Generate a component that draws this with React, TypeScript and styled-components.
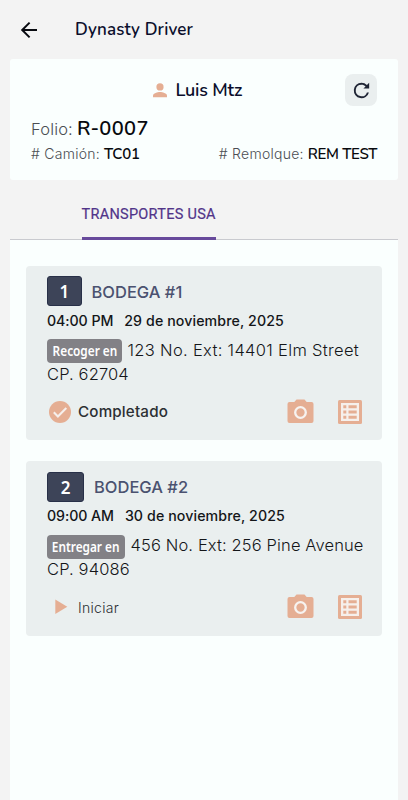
import React from "react";
import styled, { createGlobalStyle } from "styled-components";

const Global = createGlobalStyle`
  * { box-sizing: border-box; }
  body { margin: 0; background: #f3f3f3; font-family: Inter, "Noto Sans", sans-serif; color: #141619; }
  button { border: 0; padding: 0; background: none; font: inherit; color: inherit; }
  svg { display: block; flex: none; }
`;

const Screen = styled.div`
  height: 800px;
  display: flex;
  flex-direction: column;
  overflow: hidden;
`;
const TopBar = styled.header`
  height: 59px;
  flex: none;
  display: flex;
  align-items: center;
  padding: 1px 0 0 17px;
  gap: 34px;
`;
const Title = styled.h1<{ $spacing: number; $size: number }>`
  margin: 0;
  font: 600 ${(p) => p.$size}px/24px "Nunito", "Lato", sans-serif;
  letter-spacing: ${(p) => p.$spacing}px;
  color: #0b0e2c;
  white-space: nowrap;
`;
const Summary = styled.section`
  height: 121px;
  flex: none;
  margin: 0 10px;
  padding: 15px 21px 0;
  border-radius: 3px;
  background: #fafffe;
`;
const DriverRow = styled.div`
  display: grid;
  grid-template-columns: 122px 1fr 32px;
  align-items: center;
  height: 32px;
`;
const Driver = styled.div`
  grid-column: 2;
  display: flex;
  align-items: center;
  gap: 8.5px;
`;
const Refresh = styled.button`
  width: 32px;
  height: 32px;
  border-radius: 8px;
  background: #eaefef;
  display: grid;
  place-items: center;
`;
const Folio = styled.div`
  margin-top: 12.5px;
  height: 24px;
  display: flex;
  align-items: baseline;
  gap: 4px;
`;
const Meta = styled.div`
  margin-top: 1.5px;
  height: 20px;
  display: flex;
  justify-content: space-between;
`;
const Pair = styled.div`
  display: flex;
  align-items: baseline;
  gap: 4px;
`;
const Label = styled.span<{ $size: number; $spacing: number }>`
  font-size: ${(p) => p.$size}px;
  line-height: 20px;
  font-weight: 300;
  letter-spacing: ${(p) => p.$spacing}px;
  color: #4b4e53;
  white-space: nowrap;
`;
const Value = styled.span<{ $size: number; $spacing: number }>`
  font: 600 ${(p) => p.$size}px/20px "Nunito", "Lato", sans-serif;
  letter-spacing: ${(p) => p.$spacing}px;
  color: #080a0e;
  white-space: nowrap;
`;
const Tabs = styled.nav`
  height: 60px;
  flex: none;
  margin: 0 10px;
  padding-left: 71.5px;
  border-bottom: 1px solid #c9cacf;
`;
const Tab = styled.button`
  height: 60px;
  padding: 12px 0 0;
  border-bottom: 3px solid #67499b;
  border-radius: 2px 2px 0 0;
  font: 400 14.5px/20px Roboto, sans-serif;
  letter-spacing: 0.28px;
  -webkit-text-stroke: 0.2px #513489;
  color: #513489;
  white-space: nowrap;
  width: 134px;
`;
const Panel = styled.main`
  flex: 1;
  margin: 0 10px;
  padding: 25.5px 16px 0;
  background: #fafffe;
  display: flex;
  flex-direction: column;
  gap: 21px;
`;
const Card = styled.article`
  height: 174.5px;
  flex: none;
  padding: 10.5px 16px 0 21px;
  border-radius: 4px;
  background: #eaefef;
`;
const CardHead = styled.div`
  display: flex;
  align-items: center;
  gap: 10px;
  height: 30px;
`;
const Num = styled.span<{ $w: number }>`
  width: ${(p) => p.$w}px;
  height: 30px;
  border: 1px solid #283048;
  border-radius: 3px;
  background: #3d4458;
  color: #fff;
  display: grid;
  place-items: center;
  padding-top: 2px;
  font: 600 17px/20px "Noto Sans", sans-serif;
`;
const Place = styled.h2<{ $spacing: number }>`
  margin: 1.5px 0 0;
  font-size: 16.5px;
  line-height: 20px;
  font-weight: 500;
  letter-spacing: ${(p) => p.$spacing}px;
  color: #4b5270;
`;
const When = styled.div`
  margin-top: 4.5px;
  height: 20px;
  display: flex;
  gap: 11px;
  font-size: 14.2px;
  line-height: 20px;
  font-weight: 500;
  white-space: nowrap;
`;
const Time = styled.span<{ $spacing: number }>`
  letter-spacing: ${(p) => p.$spacing}px;
`;
const Address = styled.div`
  margin-top: 8px;
  height: 48px;
  font-size: 16.5px;
  line-height: 23.5px;
  font-weight: 300;
  white-space: nowrap;
`;
const FirstLine = styled.div`
  display: flex;
  gap: 5.5px;
  height: 24px;
`;
const Tag = styled.span<{ $w: number }>`
  width: ${(p) => p.$w}px;
  height: 24px;
  margin-top: 0.5px;
  border-radius: 4px;
  background: #828186;
  color: #fff;
  display: flex;
  justify-content: center;
  font: 600 13.5px/25px "Noto Sans", sans-serif;
`;
const Condensed = styled.span`
  transform: scaleX(0.875);
`;
const Text = styled.span<{ $spacing: number }>`
  letter-spacing: ${(p) => p.$spacing}px;
`;
const Actions = styled.div`
  margin-top: 12px;
  height: 26px;
  display: flex;
  align-items: center;
`;
const Status = styled.div<{ $done: boolean }>`
  flex: 1;
  display: flex;
  align-items: center;
  gap: 5px;
  font-size: ${(p) => (p.$done ? 15.2 : 14)}px;
  letter-spacing: ${(p) => (p.$done ? 0.17 : 0.3)}px;
  font-weight: ${(p) => (p.$done ? 500 : 300)};
  color: #2c2f33;
`;
const Tools = styled.div`
  display: flex;
  align-items: center;
  gap: 24.5px;
  margin-right: 4px;
`;

const PEACH = "#e5ae93";

const Arrow = () => (
  <svg width="24" height="24" viewBox="0 0 24 24" fill="none" stroke="#080a10" strokeWidth="2">
    <path d="M20 12H5.2M12.6 4.6L5.2 12l7.4 7.4" />
  </svg>
);
const Person = () => (
  <svg width="14" height="15" viewBox="0 0 14 15" fill={PEACH}>
    <circle cx="7" cy="3.9" r="3.6" />
    <path d="M0 14.2v-1.5C0 10.2 4.6 9 7 9s7 1.2 7 3.7v1.5z" />
  </svg>
);
const RefreshIcon = () => (
  <svg width="23" height="23" viewBox="0 0 24 24" fill="#1f2535">
    <path d="M17.65 6.35A7.96 7.96 0 0 0 12 4a8 8 0 1 0 7.73 10h-2.08A6 6 0 1 1 12 6c1.66 0 3.14.69 4.22 1.78L14 10h6V4z" />
  </svg>
);
const Check = () => (
  <svg width="26" height="24" viewBox="0 0 26 24">
    <circle cx="13" cy="12" r="11" fill={PEACH} />
    <path d="M6.8 12.3l4.1 4.2 8.4-8.5" fill="none" stroke="#f6efec" strokeWidth="2.1" />
  </svg>
);
const Play = () => (
  <svg width="26" height="24" viewBox="0 0 26 24">
    <path d="M8.3 4.5v14.6l12-7.3z" fill={PEACH} />
  </svg>
);
const Camera = () => (
  <svg width="27" height="26" viewBox="0 0 27 26">
    <path d="M2.500 3H7.300L9.500.500h8L19.700 3h4.800A2 2 0 0 1 26.500 5v17a2 2 0 0 1-2 2h-22a2 2 0 0 1-2-2V5a2 2 0 0 1 2-2z" fill={PEACH} />
    <circle cx="13.5" cy="13.5" r="5.3" fill="none" stroke="#f7f3f0" strokeWidth="2.3" />
  </svg>
);
const ListIcon = () => (
  <svg width="24" height="24" viewBox="0 0 24 24">
    <rect width="24" height="24" rx="1.5" fill={PEACH} />
    <path d="M3 3h18v18H3z" fill="#f6f0ec" />
    <path d="M5.300 5.300h3v3h-3zM5.300 10.500h3v3h-3zM5.300 15.700h3v3h-3zM10.500 5.300h8.200v3h-8.200zM10.500 10.500h8.200v3h-8.200zM10.500 15.700h8.200v3h-8.200z" fill={PEACH} />
  </svg>
);

const stops = [
  {
    n: 1, numW: 34.5, place: "BODEGA #1", placeLs: 0, time: "04:00 PM", timeLs: -0.08,
    date: "29 de noviembre, 2025", dateLs: 0.1, tag: "Recoger en", tagW: 75,
    street: "123 No. Ext: 14401 Elm Street", streetLs: 0.32, cp: "CP. 62704", done: true, status: "Completado",
  },
  {
    n: 2, numW: 37, place: "BODEGA #2", placeLs: 0, time: "09:00 AM", timeLs: -0.08,
    date: "30 de noviembre, 2025", dateLs: 0.1, tag: "Entregar en", tagW: 78,
    street: "456 No. Ext: 256 Pine Avenue", streetLs: 0.13, cp: "CP. 94086", done: false, status: "Iniciar",
  },
];

export default function App() {
  return (
    <Screen>
      <Global />
      <TopBar>
        <Arrow />
        <Title $size={17} $spacing={0.17}>Dynasty Driver</Title>
      </TopBar>
      <Summary>
        <DriverRow>
          <Driver>
            <Person />
            <Title as="h2" $size={18} $spacing={-0.22}>Luis Mtz</Title>
          </Driver>
          <Refresh aria-label="Actualizar"><RefreshIcon /></Refresh>
        </DriverRow>
        <Folio>
          <Label $size={16.5} $spacing={0.15}>Folio:</Label>
          <Value $size={20} $spacing={0.35}>R-0007</Value>
        </Folio>
        <Meta>
          <Pair>
            <Label $size={14} $spacing={0.27}># Camión:</Label>
            <Value $size={15} $spacing={-0.25}>TC01</Value>
          </Pair>
          <Pair>
            <Label $size={14} $spacing={0.27}># Remolque:</Label>
            <Value $size={15} $spacing={-0.35}>REM TEST</Value>
          </Pair>
        </Meta>
      </Summary>
      <Tabs><Tab>TRANSPORTES USA</Tab></Tabs>
      <Panel>
        {stops.map((s) => (
          <Card key={s.n}>
            <CardHead>
              <Num $w={s.numW}>{s.n}</Num>
              <Place $spacing={s.placeLs}>{s.place}</Place>
            </CardHead>
            <When>
              <Time $spacing={s.timeLs}>{s.time}</Time>
              <Time $spacing={s.dateLs}>{s.date}</Time>
            </When>
            <Address>
              <FirstLine>
                <Tag $w={s.tagW}><Condensed>{s.tag}</Condensed></Tag>
                <Text $spacing={s.streetLs}>{s.street}</Text>
              </FirstLine>
              <Text $spacing={0.12}>{s.cp}</Text>
            </Address>
            <Actions>
              <Status $done={s.done}>{s.done ? <Check /> : <Play />}{s.status}</Status>
              <Tools><Camera /><ListIcon /></Tools>
            </Actions>
          </Card>
        ))}
      </Panel>
    </Screen>
  );
}
